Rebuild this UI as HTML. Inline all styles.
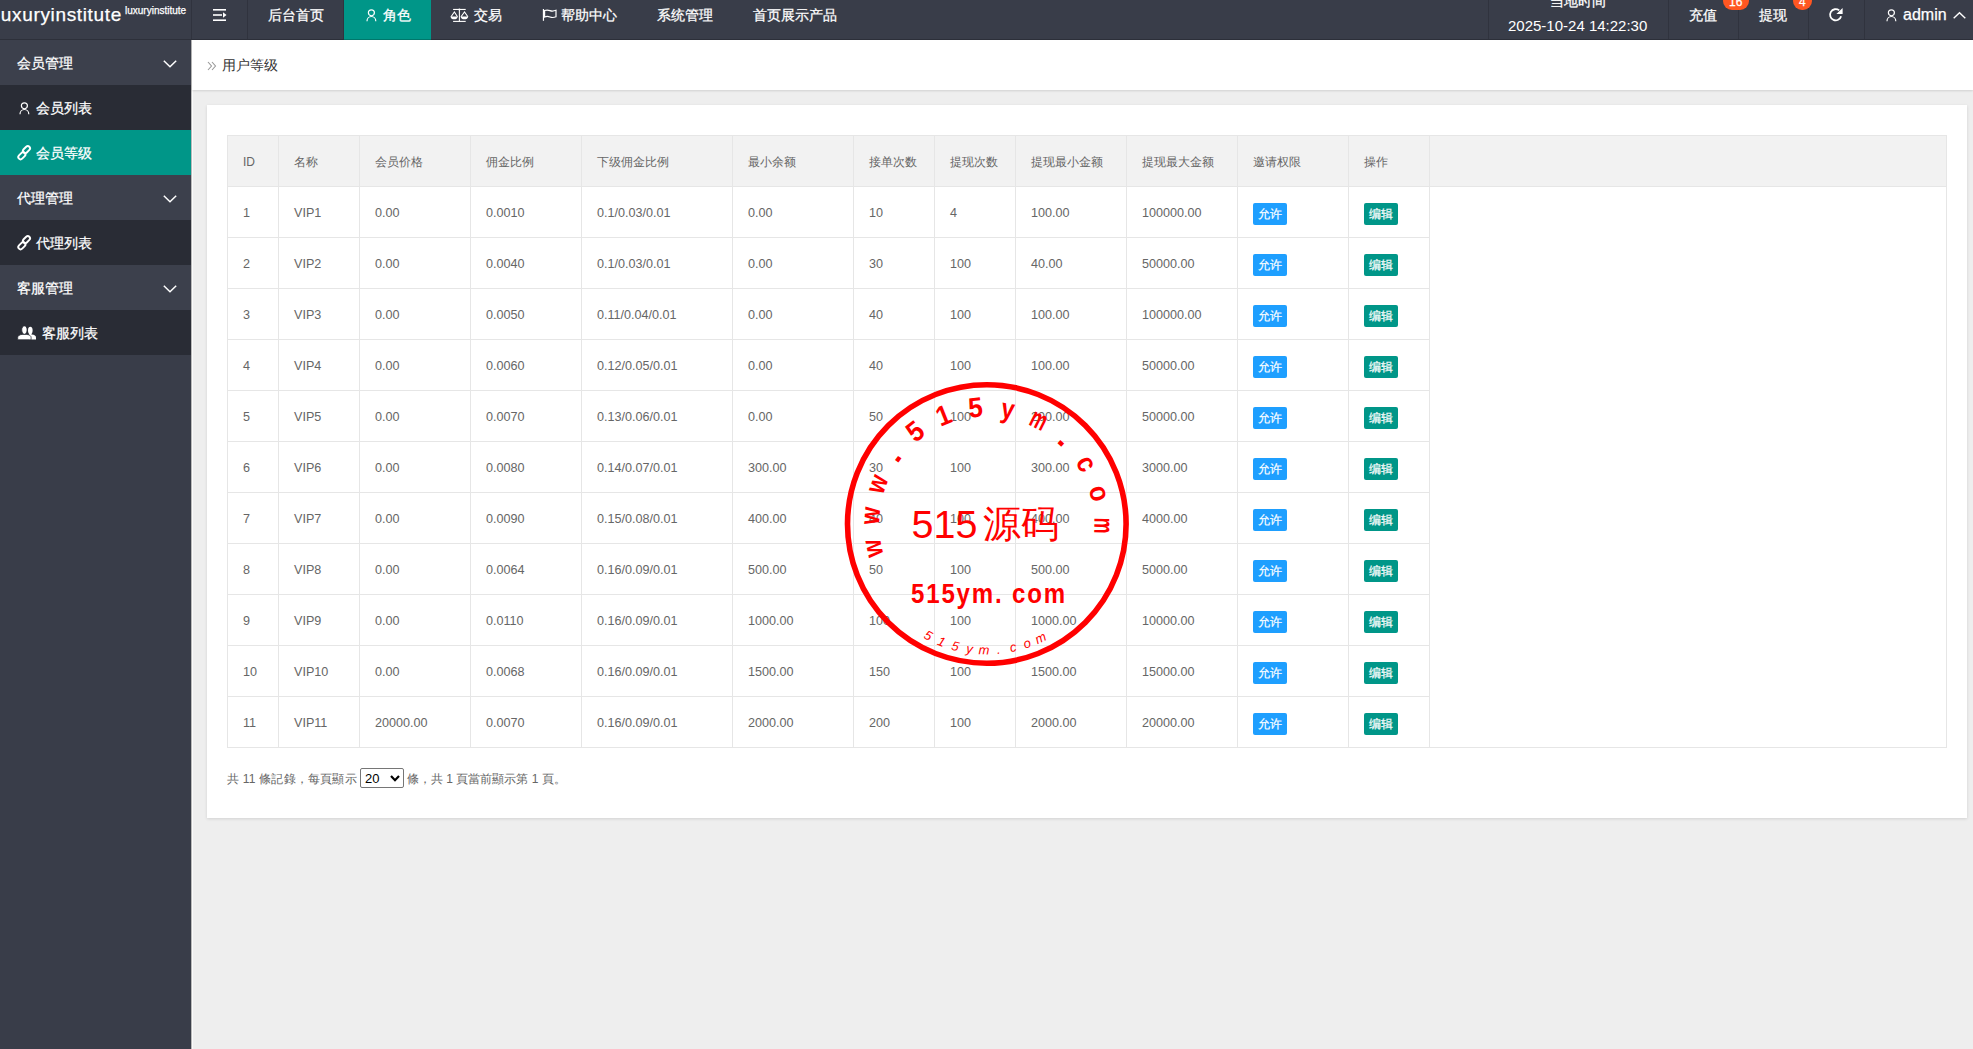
<!DOCTYPE html><html><head><meta charset="utf-8"><style>
*{margin:0;padding:0;box-sizing:border-box}
html,body{width:1973px;height:1049px;overflow:hidden;background:#eeeeee;font-family:"Liberation Sans",sans-serif;font-size:14px;color:#333}
body{position:relative}
.a{position:absolute}
.t{position:absolute;white-space:nowrap;line-height:1}
.w{color:#fff;-webkit-text-stroke:0.25px #fff}
.tx{position:absolute;font-size:12px;color:#666;white-space:nowrap;line-height:1}
.btn{position:absolute;width:34px;height:22px;border-radius:2px;color:#fff;font-size:12px;line-height:22px;text-align:center;-webkit-text-stroke:0.2px #fff}
svg{position:absolute;overflow:visible}
</style></head><body>
<div class="a" style="left:0;top:0;width:1973px;height:40px;background:#393D49"></div>
<div class="a" style="left:344px;top:0;width:87px;height:40px;background:#009688"></div>
<div class="a" style="left:0;top:39px;width:1973px;height:1px;background:rgba(0,0,0,.2)"></div>
<div class="a" style="left:191px;top:0;width:1px;height:39px;background:rgba(0,0,0,.15)"></div>
<div class="a" style="left:247px;top:0;width:1px;height:39px;background:rgba(0,0,0,.15)"></div>
<div class="a" style="left:343px;top:0;width:1px;height:39px;background:rgba(0,0,0,.15)"></div>
<div class="a" style="left:1488px;top:0;width:1px;height:39px;background:rgba(0,0,0,.15)"></div>
<div class="a" style="left:1668px;top:0;width:1px;height:39px;background:rgba(0,0,0,.15)"></div>
<div class="a" style="left:1738px;top:0;width:1px;height:39px;background:rgba(0,0,0,.15)"></div>
<div class="a" style="left:1808px;top:0;width:1px;height:39px;background:rgba(0,0,0,.15)"></div>
<div class="a" style="left:1864px;top:0;width:1px;height:39px;background:rgba(0,0,0,.15)"></div>
<div class="t w" style="left:-4px;top:4.5px;font-size:19px;letter-spacing:0.65px">luxuryinstitute</div>
<div class="t w" style="left:125px;top:6px;font-size:10px">luxuryinstitute</div>
<svg style="left:213px;top:9px" width="14" height="12" viewBox="0 0 14 12"><g fill="#fff"><rect x="0" y="0" width="13" height="1.6"/><rect x="0" y="5.2" width="9" height="1.6"/><rect x="0" y="10.4" width="13" height="1.6"/><path d="M10 3.2 L13.5 6 L10 8.8Z"/></g></svg>
<div class="t w" style="left:268px;top:8px">后台首页</div>
<div class="t w" style="left:383px;top:8px">角色</div>
<div class="t w" style="left:474px;top:8px">交易</div>
<div class="t w" style="left:561px;top:8px">帮助中心</div>
<div class="t w" style="left:657px;top:8px">系统管理</div>
<div class="t w" style="left:753px;top:8px">首页展示产品</div>
<svg style="left:366px;top:8.5px" width="11" height="13" viewBox="0 0 11 13"><g fill="none" stroke="#fff" stroke-width="1.2"><circle cx="5.4" cy="3.8" r="3.0"/><path d="M1.0 12.3 A4.4 4.8 0 0 1 9.8 12.3"/></g></svg>
<svg style="left:446px;top:4px" width="30" height="22" viewBox="0 0 30 22"><g fill="none" stroke="#fff" stroke-width="1.1"><path d="M7.1 5.45 H19.7"/><path d="M13.4 5.5 V17.4"/><path d="M7.1 17.4 H19.7"/><path d="M5 12.8 L8.4 8 L11.5 12.8"/><path d="M15 12.8 L18.5 8 L21.9 12.8"/></g><g fill="#fff"><circle cx="13.4" cy="5.45" r="1"/><path d="M4.5 12.4 H11.8 C11.6 14.6 10 15.2 8.15 15.2 C6.3 15.2 4.7 14.6 4.5 12.4Z"/><path d="M14.6 12.4 H22.2 C22 14.6 20.4 15.2 18.4 15.2 C16.5 15.2 14.8 14.6 14.6 12.4Z"/></g></svg>
<svg style="left:538px;top:4px" width="24" height="22" viewBox="0 0 24 22"><g fill="none" stroke="#fff" stroke-width="1.2"><path d="M5.45 5 V16.8"/><path d="M6.6 6.5 C9 5.6 10.5 6 12 6.6 C13.5 7.2 15.5 7.3 18 6.3 V12.8 C15.5 13.8 13.5 13.6 12 13 C10.5 12.4 9 12 6.6 13 Z"/></g></svg>
<div class="t w" style="left:1550px;top:-6px">当地时间</div>
<div class="t" style="left:1508px;top:18px;font-size:15px;color:#fff">2025-10-24 14:22:30</div>
<div class="t w" style="left:1689px;top:8px">充值</div>
<div class="t w" style="left:1759px;top:8px">提现</div>
<div class="a" style="left:1723px;top:-8px;width:26px;height:18px;border-radius:9px;background:#FF5722"></div>
<div class="t w" style="left:1729px;top:-4px;font-size:12px">16</div>
<div class="a" style="left:1793px;top:-8px;width:19px;height:18px;border-radius:9px;background:#FF5722"></div>
<div class="t w" style="left:1799px;top:-4px;font-size:12px">4</div>
<svg style="left:1824px;top:4px" width="24" height="22" viewBox="0 0 24 22"><path d="M17.1 12.2 A5.6 5.6 0 1 1 15.2 6.4" fill="none" stroke="#fff" stroke-width="1.8"/><path d="M12.4 9.9 L18.6 9.9 L18.6 3.9 Z" fill="#fff"/></svg>
<svg style="left:1886px;top:8.5px" width="11" height="13" viewBox="0 0 11 13"><g fill="none" stroke="#fff" stroke-width="1.2"><circle cx="5.4" cy="3.8" r="3.0"/><path d="M1.0 12.3 A4.4 4.8 0 0 1 9.8 12.3"/></g></svg>
<div class="t w" style="left:1903px;top:7px;font-size:16px">admin</div>
<svg style="left:1953px;top:12px" width="13" height="7" viewBox="0 0 13 7"><path d="M0.7 6.3 L6.5 0.8 L12.3 6.3" fill="none" stroke="#fff" stroke-width="1.4"/></svg>
<div class="a" style="left:0;top:40px;width:191px;height:1009px;background:#393D49"></div>
<div class="a" style="left:192px;top:40px;width:1px;height:1009px;background:#fafafa"></div>
<div class="a" style="left:0;top:40px;width:191px;height:45px;background:#3C404C"></div>
<div class="t w" style="left:17px;top:56px">会员管理</div>
<svg style="left:163px;top:60px" width="14" height="8" viewBox="0 0 14 8"><path d="M0.8 0.8 L7 6.8 L13.2 0.8" fill="none" stroke="#fff" stroke-width="1.5"/></svg>
<div class="a" style="left:0;top:85px;width:191px;height:45px;background:#292C35"></div>
<div class="t w" style="left:36px;top:101px">会员列表</div>
<div class="a" style="left:0;top:130px;width:191px;height:45px;background:#009688"></div>
<div class="t w" style="left:36px;top:146px">会员等级</div>
<div class="a" style="left:0;top:175px;width:191px;height:45px;background:#3C404C"></div>
<div class="t w" style="left:17px;top:191px">代理管理</div>
<svg style="left:163px;top:195px" width="14" height="8" viewBox="0 0 14 8"><path d="M0.8 0.8 L7 6.8 L13.2 0.8" fill="none" stroke="#fff" stroke-width="1.5"/></svg>
<div class="a" style="left:0;top:220px;width:191px;height:45px;background:#292C35"></div>
<div class="t w" style="left:36px;top:236px">代理列表</div>
<div class="a" style="left:0;top:265px;width:191px;height:45px;background:#3C404C"></div>
<div class="t w" style="left:17px;top:281px">客服管理</div>
<svg style="left:163px;top:285px" width="14" height="8" viewBox="0 0 14 8"><path d="M0.8 0.8 L7 6.8 L13.2 0.8" fill="none" stroke="#fff" stroke-width="1.5"/></svg>
<div class="a" style="left:0;top:310px;width:191px;height:45px;background:#292C35"></div>
<div class="t w" style="left:42px;top:326px">客服列表</div>
<svg style="left:19px;top:101.5px" width="11" height="13" viewBox="0 0 11 13"><g fill="none" stroke="#fff" stroke-width="1.2"><circle cx="5.4" cy="3.8" r="3.0"/><path d="M1.0 12.3 A4.4 4.8 0 0 1 9.8 12.3"/></g></svg>
<svg style="left:12px;top:140px" width="28" height="26" viewBox="0 0 28 26"><g fill="none" stroke="#fff" stroke-width="1.9"><rect x="5.8" y="13.5" width="8.1" height="4.5" rx="2.25" transform="rotate(-45 9.85 15.75)"/><rect x="10.45" y="7.35" width="8.1" height="4.5" rx="2.25" transform="rotate(-45 14.5 9.6)"/></g></svg>
<svg style="left:12px;top:230px" width="28" height="26" viewBox="0 0 28 26"><g fill="none" stroke="#fff" stroke-width="1.9"><rect x="5.8" y="13.5" width="8.1" height="4.5" rx="2.25" transform="rotate(-45 9.85 15.75)"/><rect x="10.45" y="7.35" width="8.1" height="4.5" rx="2.25" transform="rotate(-45 14.5 9.6)"/></g></svg>
<svg style="left:12px;top:318px" width="32" height="28" viewBox="0 0 32 28"><g fill="#fff"><ellipse cx="18.3" cy="12.4" rx="2.3" ry="3.7"/><rect x="17.2" y="14" width="2.2" height="3"/><path d="M17 21.6 V16.6 H19.6 C22.6 16.8 24 17.8 24 19.6 V21.6Z"/></g><g fill="#fff" stroke="#2A2D36" stroke-width="0.8"><path d="M12.4 7.9 C14 7.9 15.1 9.6 15.1 12 C15.1 13.6 14.6 14.8 13.7 15.5 V16.4 H11.1 V15.5 C10.2 14.8 9.7 13.6 9.7 12 C9.7 9.6 10.8 7.9 12.4 7.9Z"/><path d="M5.7 21.8 V19.6 C5.7 17.6 7.5 16.7 10.2 16.4 H14.6 C17.3 16.7 19.1 17.6 19.1 19.6 V21.8Z"/></g></svg>
<div class="a" style="left:191px;top:40px;width:1px;height:1009px;background:rgba(0,0,0,.22)"></div>
<div class="a" style="left:192px;top:40px;width:1781px;height:50px;background:#fff;box-shadow:0 1px 2px rgba(0,0,0,.12)"></div>
<svg style="left:207px;top:61px" width="10" height="10" viewBox="0 0 10 10"><g fill="none" stroke="#999" stroke-width="1.1"><path d="M1 1 L4.5 5 L1 9"/><path d="M5 1 L8.5 5 L5 9"/></g></svg>
<div class="t" style="left:222px;top:58px;color:#333">用户等级</div>
<div class="a" style="left:207px;top:105px;width:1760px;height:713px;background:#fff;box-shadow:0 1px 3px rgba(0,0,0,.12)"></div>
<div class="a" style="left:227px;top:135px;width:1720px;height:613px;border:1px solid #e6e6e6"></div>
<div class="a" style="left:228px;top:136px;width:1718px;height:50px;background:#f2f2f2"></div>
<div class="a" style="left:228px;top:186px;width:1718px;height:1px;background:#e6e6e6"></div>
<div class="a" style="left:278px;top:136px;width:1px;height:611px;background:#e6e6e6"></div>
<div class="a" style="left:359px;top:136px;width:1px;height:611px;background:#e6e6e6"></div>
<div class="a" style="left:470px;top:136px;width:1px;height:611px;background:#e6e6e6"></div>
<div class="a" style="left:581px;top:136px;width:1px;height:611px;background:#e6e6e6"></div>
<div class="a" style="left:732px;top:136px;width:1px;height:611px;background:#e6e6e6"></div>
<div class="a" style="left:853px;top:136px;width:1px;height:611px;background:#e6e6e6"></div>
<div class="a" style="left:934px;top:136px;width:1px;height:611px;background:#e6e6e6"></div>
<div class="a" style="left:1015px;top:136px;width:1px;height:611px;background:#e6e6e6"></div>
<div class="a" style="left:1126px;top:136px;width:1px;height:611px;background:#e6e6e6"></div>
<div class="a" style="left:1237px;top:136px;width:1px;height:611px;background:#e6e6e6"></div>
<div class="a" style="left:1348px;top:136px;width:1px;height:611px;background:#e6e6e6"></div>
<div class="a" style="left:1429px;top:136px;width:1px;height:611px;background:#e6e6e6"></div>
<div class="a" style="left:228px;top:237px;width:1201px;height:1px;background:#e6e6e6"></div>
<div class="a" style="left:228px;top:288px;width:1201px;height:1px;background:#e6e6e6"></div>
<div class="a" style="left:228px;top:339px;width:1201px;height:1px;background:#e6e6e6"></div>
<div class="a" style="left:228px;top:390px;width:1201px;height:1px;background:#e6e6e6"></div>
<div class="a" style="left:228px;top:441px;width:1201px;height:1px;background:#e6e6e6"></div>
<div class="a" style="left:228px;top:492px;width:1201px;height:1px;background:#e6e6e6"></div>
<div class="a" style="left:228px;top:543px;width:1201px;height:1px;background:#e6e6e6"></div>
<div class="a" style="left:228px;top:594px;width:1201px;height:1px;background:#e6e6e6"></div>
<div class="a" style="left:228px;top:645px;width:1201px;height:1px;background:#e6e6e6"></div>
<div class="a" style="left:228px;top:696px;width:1201px;height:1px;background:#e6e6e6"></div>
<div class="tx" style="left:243px;top:156px">ID</div>
<div class="tx" style="left:294px;top:156px">名称</div>
<div class="tx" style="left:375px;top:156px">会员价格</div>
<div class="tx" style="left:486px;top:156px">佣金比例</div>
<div class="tx" style="left:597px;top:156px">下级佣金比例</div>
<div class="tx" style="left:748px;top:156px">最小余额</div>
<div class="tx" style="left:869px;top:156px">接单次数</div>
<div class="tx" style="left:950px;top:156px">提现次数</div>
<div class="tx" style="left:1031px;top:156px">提现最小金额</div>
<div class="tx" style="left:1142px;top:156px">提现最大金额</div>
<div class="tx" style="left:1253px;top:156px">邀请权限</div>
<div class="tx" style="left:1364px;top:156px">操作</div>
<div class="tx" style="left:243px;top:207px;font-size:12.6px">1</div>
<div class="tx" style="left:294px;top:207px;font-size:12.6px">VIP1</div>
<div class="tx" style="left:375px;top:207px;font-size:12.6px">0.00</div>
<div class="tx" style="left:486px;top:207px;font-size:12.6px">0.0010</div>
<div class="tx" style="left:597px;top:207px;font-size:12.6px">0.1/0.03/0.01</div>
<div class="tx" style="left:748px;top:207px;font-size:12.6px">0.00</div>
<div class="tx" style="left:869px;top:207px;font-size:12.6px">10</div>
<div class="tx" style="left:950px;top:207px;font-size:12.6px">4</div>
<div class="tx" style="left:1031px;top:207px;font-size:12.6px">100.00</div>
<div class="tx" style="left:1142px;top:207px;font-size:12.6px">100000.00</div>
<div class="btn" style="left:1253px;top:203px;background:#1E9FFF">允许</div>
<div class="btn" style="left:1364px;top:203px;background:#009688">编辑</div>
<div class="tx" style="left:243px;top:258px;font-size:12.6px">2</div>
<div class="tx" style="left:294px;top:258px;font-size:12.6px">VIP2</div>
<div class="tx" style="left:375px;top:258px;font-size:12.6px">0.00</div>
<div class="tx" style="left:486px;top:258px;font-size:12.6px">0.0040</div>
<div class="tx" style="left:597px;top:258px;font-size:12.6px">0.1/0.03/0.01</div>
<div class="tx" style="left:748px;top:258px;font-size:12.6px">0.00</div>
<div class="tx" style="left:869px;top:258px;font-size:12.6px">30</div>
<div class="tx" style="left:950px;top:258px;font-size:12.6px">100</div>
<div class="tx" style="left:1031px;top:258px;font-size:12.6px">40.00</div>
<div class="tx" style="left:1142px;top:258px;font-size:12.6px">50000.00</div>
<div class="btn" style="left:1253px;top:254px;background:#1E9FFF">允许</div>
<div class="btn" style="left:1364px;top:254px;background:#009688">编辑</div>
<div class="tx" style="left:243px;top:309px;font-size:12.6px">3</div>
<div class="tx" style="left:294px;top:309px;font-size:12.6px">VIP3</div>
<div class="tx" style="left:375px;top:309px;font-size:12.6px">0.00</div>
<div class="tx" style="left:486px;top:309px;font-size:12.6px">0.0050</div>
<div class="tx" style="left:597px;top:309px;font-size:12.6px">0.11/0.04/0.01</div>
<div class="tx" style="left:748px;top:309px;font-size:12.6px">0.00</div>
<div class="tx" style="left:869px;top:309px;font-size:12.6px">40</div>
<div class="tx" style="left:950px;top:309px;font-size:12.6px">100</div>
<div class="tx" style="left:1031px;top:309px;font-size:12.6px">100.00</div>
<div class="tx" style="left:1142px;top:309px;font-size:12.6px">100000.00</div>
<div class="btn" style="left:1253px;top:305px;background:#1E9FFF">允许</div>
<div class="btn" style="left:1364px;top:305px;background:#009688">编辑</div>
<div class="tx" style="left:243px;top:360px;font-size:12.6px">4</div>
<div class="tx" style="left:294px;top:360px;font-size:12.6px">VIP4</div>
<div class="tx" style="left:375px;top:360px;font-size:12.6px">0.00</div>
<div class="tx" style="left:486px;top:360px;font-size:12.6px">0.0060</div>
<div class="tx" style="left:597px;top:360px;font-size:12.6px">0.12/0.05/0.01</div>
<div class="tx" style="left:748px;top:360px;font-size:12.6px">0.00</div>
<div class="tx" style="left:869px;top:360px;font-size:12.6px">40</div>
<div class="tx" style="left:950px;top:360px;font-size:12.6px">100</div>
<div class="tx" style="left:1031px;top:360px;font-size:12.6px">100.00</div>
<div class="tx" style="left:1142px;top:360px;font-size:12.6px">50000.00</div>
<div class="btn" style="left:1253px;top:356px;background:#1E9FFF">允许</div>
<div class="btn" style="left:1364px;top:356px;background:#009688">编辑</div>
<div class="tx" style="left:243px;top:411px;font-size:12.6px">5</div>
<div class="tx" style="left:294px;top:411px;font-size:12.6px">VIP5</div>
<div class="tx" style="left:375px;top:411px;font-size:12.6px">0.00</div>
<div class="tx" style="left:486px;top:411px;font-size:12.6px">0.0070</div>
<div class="tx" style="left:597px;top:411px;font-size:12.6px">0.13/0.06/0.01</div>
<div class="tx" style="left:748px;top:411px;font-size:12.6px">0.00</div>
<div class="tx" style="left:869px;top:411px;font-size:12.6px">50</div>
<div class="tx" style="left:950px;top:411px;font-size:12.6px">100</div>
<div class="tx" style="left:1031px;top:411px;font-size:12.6px">200.00</div>
<div class="tx" style="left:1142px;top:411px;font-size:12.6px">50000.00</div>
<div class="btn" style="left:1253px;top:407px;background:#1E9FFF">允许</div>
<div class="btn" style="left:1364px;top:407px;background:#009688">编辑</div>
<div class="tx" style="left:243px;top:462px;font-size:12.6px">6</div>
<div class="tx" style="left:294px;top:462px;font-size:12.6px">VIP6</div>
<div class="tx" style="left:375px;top:462px;font-size:12.6px">0.00</div>
<div class="tx" style="left:486px;top:462px;font-size:12.6px">0.0080</div>
<div class="tx" style="left:597px;top:462px;font-size:12.6px">0.14/0.07/0.01</div>
<div class="tx" style="left:748px;top:462px;font-size:12.6px">300.00</div>
<div class="tx" style="left:869px;top:462px;font-size:12.6px">30</div>
<div class="tx" style="left:950px;top:462px;font-size:12.6px">100</div>
<div class="tx" style="left:1031px;top:462px;font-size:12.6px">300.00</div>
<div class="tx" style="left:1142px;top:462px;font-size:12.6px">3000.00</div>
<div class="btn" style="left:1253px;top:458px;background:#1E9FFF">允许</div>
<div class="btn" style="left:1364px;top:458px;background:#009688">编辑</div>
<div class="tx" style="left:243px;top:513px;font-size:12.6px">7</div>
<div class="tx" style="left:294px;top:513px;font-size:12.6px">VIP7</div>
<div class="tx" style="left:375px;top:513px;font-size:12.6px">0.00</div>
<div class="tx" style="left:486px;top:513px;font-size:12.6px">0.0090</div>
<div class="tx" style="left:597px;top:513px;font-size:12.6px">0.15/0.08/0.01</div>
<div class="tx" style="left:748px;top:513px;font-size:12.6px">400.00</div>
<div class="tx" style="left:869px;top:513px;font-size:12.6px">40</div>
<div class="tx" style="left:950px;top:513px;font-size:12.6px">100</div>
<div class="tx" style="left:1031px;top:513px;font-size:12.6px">400.00</div>
<div class="tx" style="left:1142px;top:513px;font-size:12.6px">4000.00</div>
<div class="btn" style="left:1253px;top:509px;background:#1E9FFF">允许</div>
<div class="btn" style="left:1364px;top:509px;background:#009688">编辑</div>
<div class="tx" style="left:243px;top:564px;font-size:12.6px">8</div>
<div class="tx" style="left:294px;top:564px;font-size:12.6px">VIP8</div>
<div class="tx" style="left:375px;top:564px;font-size:12.6px">0.00</div>
<div class="tx" style="left:486px;top:564px;font-size:12.6px">0.0064</div>
<div class="tx" style="left:597px;top:564px;font-size:12.6px">0.16/0.09/0.01</div>
<div class="tx" style="left:748px;top:564px;font-size:12.6px">500.00</div>
<div class="tx" style="left:869px;top:564px;font-size:12.6px">50</div>
<div class="tx" style="left:950px;top:564px;font-size:12.6px">100</div>
<div class="tx" style="left:1031px;top:564px;font-size:12.6px">500.00</div>
<div class="tx" style="left:1142px;top:564px;font-size:12.6px">5000.00</div>
<div class="btn" style="left:1253px;top:560px;background:#1E9FFF">允许</div>
<div class="btn" style="left:1364px;top:560px;background:#009688">编辑</div>
<div class="tx" style="left:243px;top:615px;font-size:12.6px">9</div>
<div class="tx" style="left:294px;top:615px;font-size:12.6px">VIP9</div>
<div class="tx" style="left:375px;top:615px;font-size:12.6px">0.00</div>
<div class="tx" style="left:486px;top:615px;font-size:12.6px">0.0110</div>
<div class="tx" style="left:597px;top:615px;font-size:12.6px">0.16/0.09/0.01</div>
<div class="tx" style="left:748px;top:615px;font-size:12.6px">1000.00</div>
<div class="tx" style="left:869px;top:615px;font-size:12.6px">100</div>
<div class="tx" style="left:950px;top:615px;font-size:12.6px">100</div>
<div class="tx" style="left:1031px;top:615px;font-size:12.6px">1000.00</div>
<div class="tx" style="left:1142px;top:615px;font-size:12.6px">10000.00</div>
<div class="btn" style="left:1253px;top:611px;background:#1E9FFF">允许</div>
<div class="btn" style="left:1364px;top:611px;background:#009688">编辑</div>
<div class="tx" style="left:243px;top:666px;font-size:12.6px">10</div>
<div class="tx" style="left:294px;top:666px;font-size:12.6px">VIP10</div>
<div class="tx" style="left:375px;top:666px;font-size:12.6px">0.00</div>
<div class="tx" style="left:486px;top:666px;font-size:12.6px">0.0068</div>
<div class="tx" style="left:597px;top:666px;font-size:12.6px">0.16/0.09/0.01</div>
<div class="tx" style="left:748px;top:666px;font-size:12.6px">1500.00</div>
<div class="tx" style="left:869px;top:666px;font-size:12.6px">150</div>
<div class="tx" style="left:950px;top:666px;font-size:12.6px">100</div>
<div class="tx" style="left:1031px;top:666px;font-size:12.6px">1500.00</div>
<div class="tx" style="left:1142px;top:666px;font-size:12.6px">15000.00</div>
<div class="btn" style="left:1253px;top:662px;background:#1E9FFF">允许</div>
<div class="btn" style="left:1364px;top:662px;background:#009688">编辑</div>
<div class="tx" style="left:243px;top:717px;font-size:12.6px">11</div>
<div class="tx" style="left:294px;top:717px;font-size:12.6px">VIP11</div>
<div class="tx" style="left:375px;top:717px;font-size:12.6px">20000.00</div>
<div class="tx" style="left:486px;top:717px;font-size:12.6px">0.0070</div>
<div class="tx" style="left:597px;top:717px;font-size:12.6px">0.16/0.09/0.01</div>
<div class="tx" style="left:748px;top:717px;font-size:12.6px">2000.00</div>
<div class="tx" style="left:869px;top:717px;font-size:12.6px">200</div>
<div class="tx" style="left:950px;top:717px;font-size:12.6px">100</div>
<div class="tx" style="left:1031px;top:717px;font-size:12.6px">2000.00</div>
<div class="tx" style="left:1142px;top:717px;font-size:12.6px">20000.00</div>
<div class="btn" style="left:1253px;top:713px;background:#1E9FFF">允许</div>
<div class="btn" style="left:1364px;top:713px;background:#009688">编辑</div>
<div class="tx" style="left:227px;top:773px;letter-spacing:0.2px">共 11 條記錄，每頁顯示</div>
<div class="a" style="left:360px;top:768px;width:44px;height:20px;border:1px solid #767676;border-radius:2px;background:#fff"></div>
<div class="t" style="left:365px;top:772px;font-size:13px;color:#000">20</div>
<svg style="left:390px;top:775px" width="10" height="7" viewBox="0 0 10 7"><path d="M1 1 L5 5.2 L9 1" fill="none" stroke="#000" stroke-width="2.2"/></svg>
<div class="tx" style="left:407px;top:773px">條，共 1 頁當前顯示第 1 頁。</div>
<svg style="left:0;top:0" width="1973" height="1049" viewBox="0 0 1973 1049"><circle cx="986.8" cy="524.0" r="139.3" fill="none" stroke="#f00" stroke-width="5.6"/><g transform="rotate(-102.00 986.8 524.0)"><text x="986.8" y="416.5" text-anchor="middle" transform="translate(986.8 416.5) scale(0.8 1) translate(-986.8 -416.5)" font-family="Liberation Sans" font-weight="bold" font-size="28" fill="#f00">w</text></g><g transform="rotate(-85.93 986.8 524.0)"><text x="986.8" y="416.5" text-anchor="middle" transform="translate(986.8 416.5) scale(0.8 1) translate(-986.8 -416.5)" font-family="Liberation Sans" font-weight="bold" font-size="28" fill="#f00">w</text></g><g transform="rotate(-69.86 986.8 524.0)"><text x="986.8" y="416.5" text-anchor="middle" transform="translate(986.8 416.5) scale(0.8 1) translate(-986.8 -416.5)" font-family="Liberation Sans" font-weight="bold" font-size="28" fill="#f00">w</text></g><g transform="rotate(-53.79 986.8 524.0)"><text x="986.8" y="416.5" text-anchor="middle" transform="translate(986.8 416.5) scale(1.3 1) translate(-986.8 -416.5)" font-family="Liberation Sans" font-weight="bold" font-size="28" fill="#f00">.</text></g><g transform="rotate(-37.72 986.8 524.0)"><text x="986.8" y="416.5" text-anchor="middle" transform="translate(986.8 416.5) scale(0.92 1) translate(-986.8 -416.5)" font-family="Liberation Sans" font-weight="bold" font-size="28" fill="#f00">5</text></g><g transform="rotate(-21.65 986.8 524.0)"><text x="986.8" y="416.5" text-anchor="middle" transform="translate(986.8 416.5) scale(0.9 1) translate(-986.8 -416.5)" font-family="Liberation Sans" font-weight="bold" font-size="28" fill="#f00">1</text></g><g transform="rotate(-5.58 986.8 524.0)"><text x="986.8" y="416.5" text-anchor="middle" transform="translate(986.8 416.5) scale(0.92 1) translate(-986.8 -416.5)" font-family="Liberation Sans" font-weight="bold" font-size="28" fill="#f00">5</text></g><g transform="rotate(10.49 986.8 524.0)"><text x="986.8" y="416.5" text-anchor="middle" transform="translate(986.8 416.5) scale(0.85 1) translate(-986.8 -416.5)" font-family="Liberation Sans" font-weight="bold" font-size="28" fill="#f00">y</text></g><g transform="rotate(26.56 986.8 524.0)"><text x="986.8" y="416.5" text-anchor="middle" transform="translate(986.8 416.5) scale(0.64 1) translate(-986.8 -416.5)" font-family="Liberation Sans" font-weight="bold" font-size="28" fill="#f00">m</text></g><g transform="rotate(42.63 986.8 524.0)"><text x="986.8" y="416.5" text-anchor="middle" transform="translate(986.8 416.5) scale(1.3 1) translate(-986.8 -416.5)" font-family="Liberation Sans" font-weight="bold" font-size="28" fill="#f00">.</text></g><g transform="rotate(58.70 986.8 524.0)"><text x="986.8" y="416.5" text-anchor="middle" transform="translate(986.8 416.5) scale(0.9 1) translate(-986.8 -416.5)" font-family="Liberation Sans" font-weight="bold" font-size="28" fill="#f00">c</text></g><g transform="rotate(74.77 986.8 524.0)"><text x="986.8" y="416.5" text-anchor="middle" transform="translate(986.8 416.5) scale(0.9 1) translate(-986.8 -416.5)" font-family="Liberation Sans" font-weight="bold" font-size="28" fill="#f00">o</text></g><g transform="rotate(90.84 986.8 524.0)"><text x="986.8" y="416.5" text-anchor="middle" transform="translate(986.8 416.5) scale(0.64 1) translate(-986.8 -416.5)" font-family="Liberation Sans" font-weight="bold" font-size="28" fill="#f00">m</text></g><g transform="rotate(27.70 986.8 524.0)"><text x="986.8" y="654.5" text-anchor="middle" font-family="Liberation Sans" font-style="italic" font-size="13" fill="#f00">5</text></g><g transform="rotate(21.08 986.8 524.0)"><text x="986.8" y="654.5" text-anchor="middle" font-family="Liberation Sans" font-style="italic" font-size="13" fill="#f00">1</text></g><g transform="rotate(14.46 986.8 524.0)"><text x="986.8" y="654.5" text-anchor="middle" font-family="Liberation Sans" font-style="italic" font-size="13" fill="#f00">5</text></g><g transform="rotate(7.84 986.8 524.0)"><text x="986.8" y="654.5" text-anchor="middle" font-family="Liberation Sans" font-style="italic" font-size="13" fill="#f00">y</text></g><g transform="rotate(1.22 986.8 524.0)"><text x="986.8" y="654.5" text-anchor="middle" font-family="Liberation Sans" font-style="italic" font-size="13" fill="#f00">m</text></g><g transform="rotate(-5.40 986.8 524.0)"><text x="986.8" y="654.5" text-anchor="middle" font-family="Liberation Sans" font-style="italic" font-size="13" fill="#f00">.</text></g><g transform="rotate(-12.02 986.8 524.0)"><text x="986.8" y="654.5" text-anchor="middle" font-family="Liberation Sans" font-style="italic" font-size="13" fill="#f00">c</text></g><g transform="rotate(-18.64 986.8 524.0)"><text x="986.8" y="654.5" text-anchor="middle" font-family="Liberation Sans" font-style="italic" font-size="13" fill="#f00">o</text></g><g transform="rotate(-25.26 986.8 524.0)"><text x="986.8" y="654.5" text-anchor="middle" font-family="Liberation Sans" font-style="italic" font-size="13" fill="#f00">m</text></g><text x="911.5" y="538" font-family="Liberation Sans" font-size="39.5" fill="#f00">515</text><text x="983" y="537" font-family="Liberation Serif" font-size="38" fill="#f00">源码</text><text transform="translate(911 603) scale(0.86 1)" x="0" y="0" font-family="Liberation Sans" font-weight="bold" font-size="28" fill="#f00" letter-spacing="2.1">515ym. com</text></svg>
</body></html>
